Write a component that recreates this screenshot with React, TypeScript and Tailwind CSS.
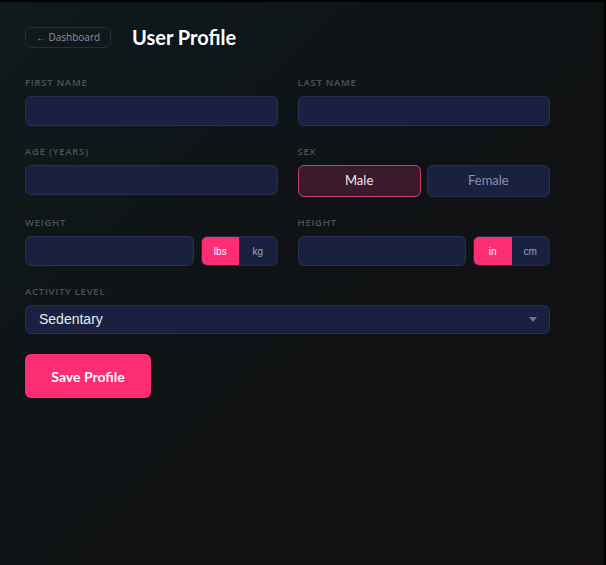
import React, { useState } from "react";

type WeightUnit = "lbs" | "kg";
type HeightUnit = "in" | "cm";

const FONT = "font-['Lato','Open_Sans',sans-serif]";

function Label({ children }: { children: React.ReactNode }) {
  return (
    <label className="block text-[9.5px] font-semibold uppercase tracking-[0.08em] text-[#4d535b] font-['Open_Sans',sans-serif] mb-[7px] leading-[13px]">
      {children}
    </label>
  );
}

function TextInput() {
  return (
    <input
      type="text"
      className="w-full min-w-0 h-[30px] rounded-md bg-[#1a2140] border border-[#283052] px-3 text-sm text-white outline-none"
    />
  );
}

function UnitToggle<T extends string>({
  options,
  value,
  onChange,
}: {
  options: T[];
  value: T;
  onChange: (v: T) => void;
}) {
  return (
    <div className="flex h-[30px] w-[77px] shrink-0 overflow-hidden rounded-md border border-[#232b47] bg-[#1a2140]">
      {options.map((opt) => (
        <button
          key={opt}
          type="button"
          onClick={() => onChange(opt)}
          className={`flex-1 text-[10px] font-['Liberation_Sans',Arial,sans-serif] ${
            value === opt ? "bg-[#fd2d73] text-white" : "text-[#9aa3b8]"
          }`}
        >
          {opt}
        </button>
      ))}
    </div>
  );
}

export default function App() {
  const [sex, setSex] = useState<"Male" | "Female">("Male");
  const [weightUnit, setWeightUnit] = useState<WeightUnit>("lbs");
  const [heightUnit, setHeightUnit] = useState<HeightUnit>("in");

  return (
    <div className={`min-h-[565px] w-[606px] border-t-2 border-r-2 border-black bg-gradient-to-br from-[#0e1a1c] via-[#0f1214] to-[#141011] ${FONT}`}>
      <div className="w-[550px] pl-[25px] pt-[25px]">
        {/* Header */}
        <div className="flex items-center gap-[21px]">
          <button
            type="button"
            className="h-[21px] w-[86px] rounded-md border border-[#262e31] bg-[#0f181a] text-[10px] text-[#8b949c] font-['Open_Sans',sans-serif]"
          >
            ← Dashboard
          </button>
          <h1 className="text-[20px] font-bold text-white leading-none pb-[1px]">User Profile</h1>
        </div>

        {/* Form */}
        <div className="mt-[28px] grid grid-cols-2 gap-x-[20px] gap-y-[19px]">
          <div>
            <Label>First Name</Label>
            <TextInput />
          </div>
          <div>
            <Label>Last Name</Label>
            <TextInput />
          </div>

          <div>
            <Label>Age (years)</Label>
            <TextInput />
          </div>
          <div>
            <Label>Sex</Label>
            <div className="grid grid-cols-2 gap-[6px]">
              {(["Male", "Female"] as const).map((s) => (
                <button
                  key={s}
                  type="button"
                  onClick={() => setSex(s)}
                  className={`h-[32px] rounded-md border text-[13px] ${
                    sex === s
                      ? "bg-[#3a1a2b] border-[#c93d6c] text-[#f1e6ea]"
                      : "bg-[#1a2140] border-[#283052] text-[#8a92aa]"
                  }`}
                >
                  {s}
                </button>
              ))}
            </div>
          </div>

          <div>
            <Label>Weight</Label>
            <div className="flex gap-[7px]">
              <TextInput />
              <UnitToggle options={["lbs", "kg"]} value={weightUnit} onChange={setWeightUnit} />
            </div>
          </div>
          <div>
            <Label>Height</Label>
            <div className="flex gap-[7px]">
              <TextInput />
              <UnitToggle options={["in", "cm"]} value={heightUnit} onChange={setHeightUnit} />
            </div>
          </div>

          <div className="col-span-2">
            <Label>Activity Level</Label>
            <div className="relative">
              <select className="w-full h-[29px] appearance-none rounded-md border border-[#283052] bg-[#1a2140] pl-[13px] text-[14px] text-[#e8eaf0] outline-none font-['Liberation_Sans',Arial,sans-serif]">
                <option>Sedentary</option>
                <option>Lightly Active</option>
                <option>Moderately Active</option>
                <option>Very Active</option>
              </select>
              <svg
                className="pointer-events-none absolute right-[13px] top-[12px]"
                width="8"
                height="5"
                viewBox="0 0 8 5"
              >
                <path d="M0 0h8L4 5z" fill="#6b7388" />
              </svg>
            </div>
          </div>
        </div>

        <button
          type="button"
          className="mt-[20px] h-[44px] w-[126px] rounded-md bg-[#fd2d73] text-[14px] font-bold text-white"
        >
          Save Profile
        </button>
      </div>
    </div>
  );
}
